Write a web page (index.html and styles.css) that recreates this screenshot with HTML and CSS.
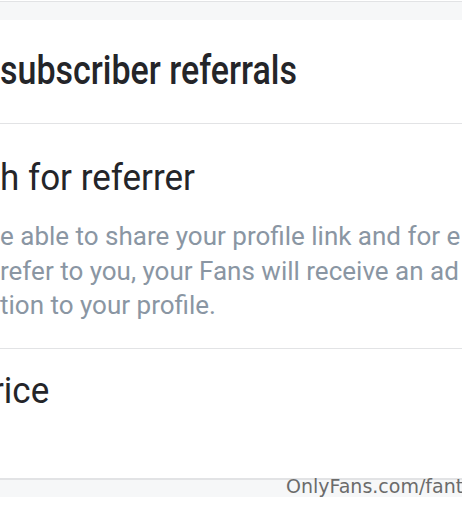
FILE: index.html
```html
<!DOCTYPE html>
<html>
<head>
<meta charset="utf-8">
<link rel="stylesheet" href="styles.css">
</head>
<body>
<div class="page">
  <div class="band band-top"></div>
  <section class="row row-title">
    <h1 class="title">subscriber referrals</h1>
  </section>
  <section class="row row-referrer">
    <h2 class="label">h for referrer</h2>
    <p class="desc">e able to share your profile link and for e<br>refer to you, your Fans will receive an ad<br>tion to your profile.</p>
  </section>
  <section class="row row-price">
    <h2 class="label label-price">rice</h2>
  </section>
  <div class="band band-bottom"></div>
  <div class="watermark">OnlyFans.com/fant</div>
</div>
</body>
</html>
```
FILE: styles.css
```css
html, body {
  margin: 0;
  padding: 0;
  background: #ffffff;
}
.page {
  position: relative;
  width: 462px;
  height: 512px;
  overflow: hidden;
  padding-top: 1px;
  box-sizing: border-box;
  font-family: Roboto, "Liberation Sans", sans-serif;
  color: #242529;
}
.band {
  background: #f6f7f8;
  border-top: 1px solid #e2e3e5;
}
.band-top {
  height: 18px;
}
.band-bottom {
  height: 17px;
}
.row {
  border-bottom: 1px solid #e2e3e5;
  white-space: nowrap;
  overflow: hidden;
  box-sizing: border-box;
}
.row-title {
  height: 104px;
  padding-top: 32px;
}
.title {
  margin: 0;
  font-size: 34px;
  font-weight: 500;
  line-height: 40px;
  transform: scaleY(1.18);
  transform-origin: 0 31px;
}
.row-referrer {
  height: 225px;
  padding-top: 35px;
}
.label {
  margin: 0;
  font-size: 35px;
  font-weight: 400;
  line-height: 40px;
  transform: scaleY(1.08);
  transform-origin: 0 32px;
}
.label-price {
  margin-left: -8px;
}
.desc {
  margin: 20px 0 0;
  font-size: 26px;
  line-height: 34.5px;
  color: #8a96a3;
}
.row-price {
  height: 130px;
  padding-top: 23px;
}
.watermark {
  position: absolute;
  left: 286px;
  top: 475px;
  font-family: "DejaVu Sans", sans-serif;
  font-size: 19px;
  color: #6b6b6b;
  white-space: nowrap;
}
```
